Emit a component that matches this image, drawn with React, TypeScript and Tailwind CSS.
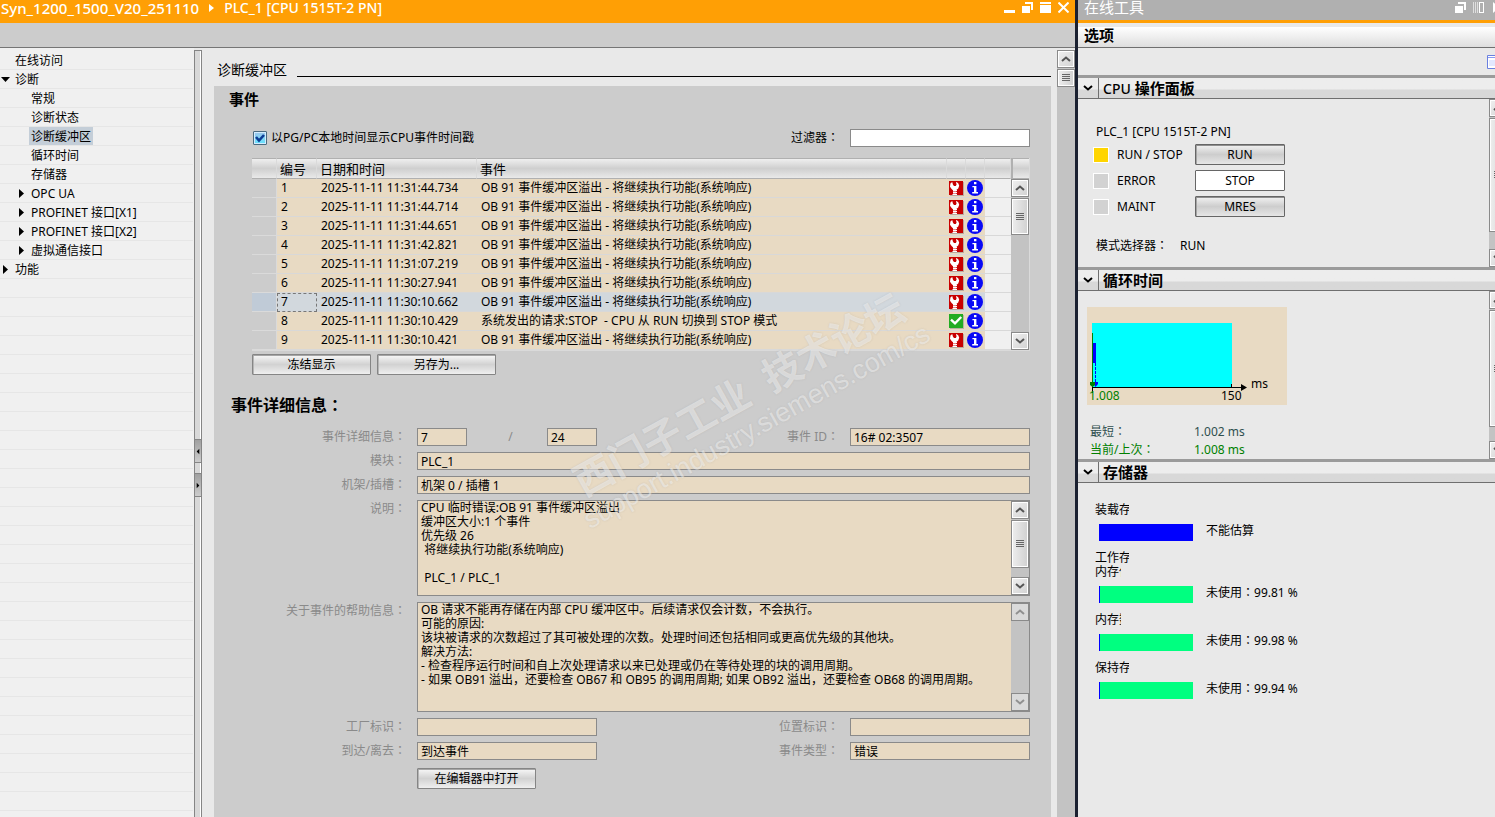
import React, { useState } from 'react';
import clsx from 'clsx';

interface TreeItem {
  label: string;
  level: 0 | 1;
  arrow?: 'open' | 'closed';
}

interface DiagEvent {
  id: number;
  time: string;
  text: string;
  ok?: boolean;
}

const OVERFLOW = 'OB 91 事件缓冲区溢出 - 将继续执行功能(系统响应)';

const treeItems: TreeItem[] = [
  { label: '在线访问', level: 0 },
  { label: '诊断', level: 0, arrow: 'open' },
  { label: '常规', level: 1 },
  { label: '诊断状态', level: 1 },
  { label: '诊断缓冲区', level: 1 },
  { label: '循环时间', level: 1 },
  { label: '存储器', level: 1 },
  { label: 'OPC UA', level: 1, arrow: 'closed' },
  { label: 'PROFINET 接口[X1]', level: 1, arrow: 'closed' },
  { label: 'PROFINET 接口[X2]', level: 1, arrow: 'closed' },
  { label: '虚拟通信接口', level: 1, arrow: 'closed' },
  { label: '功能', level: 0, arrow: 'closed' },
];

const events: DiagEvent[] = [
  { id: 1, time: '2025-11-11 11:31:44.734', text: OVERFLOW },
  { id: 2, time: '2025-11-11 11:31:44.714', text: OVERFLOW },
  { id: 3, time: '2025-11-11 11:31:44.651', text: OVERFLOW },
  { id: 4, time: '2025-11-11 11:31:42.821', text: OVERFLOW },
  { id: 5, time: '2025-11-11 11:31:07.219', text: OVERFLOW },
  { id: 6, time: '2025-11-11 11:30:27.941', text: OVERFLOW },
  { id: 7, time: '2025-11-11 11:30:10.662', text: OVERFLOW },
  { id: 8, time: '2025-11-11 11:30:10.429', text: '系统发出的请求:STOP  - CPU 从 RUN 切换到 STOP 模式', ok: true },
  { id: 9, time: '2025-11-11 11:30:10.421', text: OVERFLOW },
];

const description = `CPU 临时错误:OB 91 事件缓冲区溢出
缓冲区大小:1 个事件
优先级 26
 将继续执行功能(系统响应)

 PLC_1 / PLC_1`;

const helpText = `OB 请求不能再存储在内部 CPU 缓冲区中。后续请求仅会计数，不会执行。
可能的原因:
该块被请求的次数超过了其可被处理的次数。处理时间还包括相同或更高优先级的其他块。
解决方法:
- 检查程序运行时间和自上次处理请求以来已处理或仍在等待处理的块的调用周期。
- 如果 OB91 溢出，还要检查 OB67 和 OB95 的调用周期; 如果 OB92 溢出，还要检查 OB68 的调用周期。`;

// Full-width colon, centred in its cell
const Colon = () => <span className="font-['Noto_Sans_CJK_TC',sans-serif] leading-none">：</span>;

const Chevron = ({ up }: { up?: boolean }) => (
  <svg width="10" height="6" viewBox="0 0 10 6" fill="none" stroke="currentColor" strokeWidth="2">
    <path d={up ? 'M1 5 L5 1.5 L9 5' : 'M1 1 L5 4.5 L9 1'} />
  </svg>
);

const ScrollButton = ({ up, disabled }: { up?: boolean; disabled?: boolean }) => (
  <button
    aria-label={up ? '向上' : '向下'}
    disabled={disabled}
    className={clsx(
      'flex h-[18px] w-[18px] shrink-0 items-center justify-center border border-[#8a8a8a]',
      disabled ? 'bg-[#dadada] text-[#909090]' : 'bg-linear-to-br from-[#f0f0f0] to-[#d2d2d2] text-[#555] shadow-[inset_0_0_0_1px_#fff]'
    )}
  >
    <Chevron up={up} />
  </button>
);

const ScrollBar = ({ thumb, disabled, down = true }: { thumb?: string; disabled?: boolean; down?: boolean }) => (
  <div className="flex w-[18px] shrink-0 flex-col bg-[#c3c3c3]">
    <ScrollButton up disabled={disabled} />
    {thumb && (
      <div
        className={clsx(
          'mt-px flex shrink-0 items-center justify-center border border-[#8a8a8a] bg-linear-to-r from-[#eee] to-[#d0d0d0] shadow-[inset_0_0_0_1px_#fff]',
          thumb
        )}
      >
        <svg width="8" height="8" viewBox="0 0 8 8" stroke="#666" shapeRendering="crispEdges">
          <path d="M0 .5H8M0 2.5H8M0 4.5H8M0 6.5H8" />
        </svg>
      </div>
    )}
    <div className="flex-1" />
    {down && <ScrollButton disabled={disabled} />}
  </div>
);

const PushButton = ({ children, className }: { children: React.ReactNode; className?: string }) => (
  <button
    className={clsx(
      'h-[21px] rounded-[1px] border text-center leading-[17px] text-black',
      className ??
        'w-[119px] border-[#858585] bg-linear-to-b from-[#f8f8f8] via-[#d2d2d2] to-[#efefef] shadow-[inset_0_1px_0_#a5a5a5,inset_1px_0_0_#b5b5b5]'
    )}
  >
    {children}
  </button>
);

const WrenchIcon = () => (
  <svg width="15" height="15" viewBox="0 0 15 15" className="block">
    <path d="M1 1H15V15H1Z" fill="#b9a9a0" />
    <path d="M0 0H14V14H0Z" fill="#c80000" />
    <path d="M3.2 1 L1.4 2.6 L1 5.8 L2.6 8 L4 9.2 H7 L9.2 7.4 L10.2 4.8 L9.4 2.4 L7.6 1 L7 1.4 L7.6 3.6 L6.8 5 L5 5 L4 3.8 Z" fill="#fff" />
    <path d="M4 9.5H8M4 11.5H8M3.5 13.5H8" stroke="#fff" />
    <path d="M4 10.5H7.4M4 12.5H7.4" stroke="#f4b0b0" strokeWidth=".8" />
  </svg>
);

const OkIcon = () => (
  <svg width="15" height="15" viewBox="0 0 15 15" className="block">
    <path d="M1 1H15V15H1Z" fill="#b5b5a0" />
    <path d="M0 0H14V14H0Z" fill="#22ac22" />
    <path d="M2 5.6 L6 9.4 L12.2 3" fill="none" stroke="#fff" strokeWidth="2.4" />
  </svg>
);

const InfoIcon = () => (
  <svg width="16" height="16" viewBox="0 0 16 16" className="block">
    <circle cx="8" cy="8" r="8" fill="#0a0af5" />
    <path d="M7 2H9.4V4.3H7ZM5.4 6H9.4V12H11V13.4H5.2V12H7V7.2H5.4Z" fill="#fff" />
  </svg>
);

const TreeArrow = ({ dir }: { dir: 'open' | 'closed' }) => (
  <svg width="9" height="9" viewBox="0 0 9 9">
    <path d={dir === 'open' ? 'M0 2H9L4.5 7Z' : 'M2 0V9L7 4.5Z'} fill="#000" />
  </svg>
);

const RestoreIcon = () => (
  <svg width="11" height="11" viewBox="0 0 11 11">
    <path d="M0 4H8V11H0Z" fill="#fff" />
    <path d="M3 0H11V8H9V2H3Z" fill="#fff" />
  </svg>
);

const inputClass = 'h-[18px] border border-[#8a8a8a] bg-[#e8dac3] px-[3px]';

const LabelCell = ({ htmlFor, children }: { htmlFor: string; children: React.ReactNode }) => (
  <label htmlFor={htmlFor} className="h-[18px] w-[203px] shrink-0 pr-[11px] text-right leading-[18px] text-[#8a8a8a]">
    {children}
    <Colon />
  </label>
);

// Second label and box of a row, pushed to the right edge
const RightField = ({ id, label, value }: { id: string; label: string; value: string }) => (
  <>
    <label htmlFor={id} className="ml-auto h-[18px] pr-[11px] leading-[18px] text-[#8a8a8a]">
      {label}
      <Colon />
    </label>
    <input id={id} readOnly value={value} className={clsx(inputClass, 'w-[180px]')} />
  </>
);

const EventTable = ({ selected, onSelect }: { selected: number; onSelect: (id: number) => void }) => (
  <div className="ml-[38px] flex border-r border-b border-[#dadada]">
    <table className="min-w-0 flex-1 table-fixed border-separate border-spacing-0 text-left">
      <colgroup>
        <col className="w-[25px]" />
        <col className="w-[40px]" />
        <col className="w-[160px]" />
        <col />
        <col className="w-[19px]" />
        <col className="w-[19px]" />
        <col className="w-[26px]" />
      </colgroup>
      <thead>
        <tr>
          {['', '编号', '日期和时间', '事件', '', '', ''].map((title, i) => (
            <th
              key={i}
              className="h-[21px] border-t border-r border-b border-t-[#b0b0b0] border-r-[#dadada] border-b-[#b0b0b0] bg-linear-to-b from-[#efefef] via-[#cfcfcf] to-[#e9e9e9] p-0 pl-[3px] text-[13px] leading-[14px] font-normal"
            >
              {title}
            </th>
          ))}
        </tr>
      </thead>
      <tbody>
        {events.map(ev => {
          const active = ev.id === selected;
          const cell = clsx('h-[19px] overflow-hidden border-b border-[#d8d8d8] p-0 whitespace-pre', active ? 'bg-[#d2d8dd]' : 'bg-[#e8dac3]');
          return (
            <tr key={ev.id} onClick={() => onSelect(ev.id)}>
              <td className={clsx('h-[19px] border-r border-b border-[#dadada] p-0', active ? 'bg-[#c0cbd7]' : 'bg-[#ccc]')} />
              <td className={clsx(cell, 'pl-1', active && 'outline outline-dashed outline-[#777] -outline-offset-1')}>{ev.id}</td>
              <td className={clsx(cell, 'pl-1')}>{ev.time}</td>
              <td className={clsx(cell, 'pl-1')}>{ev.text}</td>
              <td className={clsx(cell, 'pl-[2px]')}>{ev.ok ? <OkIcon /> : <WrenchIcon />}</td>
              <td className={clsx(cell, 'pl-px')}>
                <InfoIcon />
              </td>
              <td className="h-[19px] border-b border-[#d8d8d8] bg-[#f0f0f0] p-0" />
            </tr>
          );
        })}
      </tbody>
    </table>
    <div className="flex flex-col">
      <div className="h-[21px] border-y border-l-2 border-[#b0b0b0] bg-linear-to-b from-[#efefef] via-[#cfcfcf] to-[#e9e9e9]" />
      <div className="flex flex-1">
        <ScrollBar thumb="h-[37px]" />
      </div>
    </div>
  </div>
);

const SectionHeader = ({ children }: { children: React.ReactNode }) => (
  <div className="flex h-[24px] shrink-0 items-center border-t-[3px] border-b border-t-[#9b9b9b] border-b-[#6f6f6f] bg-linear-to-b from-[#ededed] from-55% to-[#d8d8d8] to-60%">
    <button aria-label="折叠" className="flex h-full w-[21px] items-center justify-center border-r border-[#6f6f6f]">
      <Chevron />
    </button>
    <h2 className="pl-1 text-[15px] leading-[20px] font-bold">{children}</h2>
  </div>
);

// The scroll bar runs past the right window edge, only its left part shows
const CutScrollBar = ({ thumb }: { thumb: string }) => (
  <div className="ml-auto flex w-[6px] shrink-0 overflow-hidden">
    <ScrollBar thumb={thumb} />
  </div>
);

const CpuPanel = () => (
  <div className="flex">
    <div className="flex-1 pt-[26px] pb-[14px] pl-[15px] leading-[14px]">
      <p className="pl-[3px]">PLC_1 [CPU 1515T-2 PN]</p>
      <div className="mt-[5px] flex flex-col gap-[5px]">
        {[
          { led: 'RUN / STOP', on: true, cmd: 'RUN' },
          { led: 'ERROR', on: false, cmd: 'STOP' },
          { led: 'MAINT', on: false, cmd: 'MRES' },
        ].map(row => (
          <div key={row.cmd} className="flex items-center">
            <span className={clsx('size-4 border border-white', row.on ? 'bg-[#ffd500]' : 'bg-[#d2d2d2]')} />
            <span className="w-[86px] pl-2">{row.led}</span>
            <PushButton
              className={clsx(
                'w-[90px] border-[#666]',
                row.cmd === 'STOP'
                  ? 'bg-white'
                  : 'bg-linear-to-b from-[#f2f2f2] via-[#cdcdcd] to-[#e6e6e6] shadow-[inset_0_1px_0_#8f8f8f,inset_1px_0_0_#a5a5a5]'
              )}
            >
              {row.cmd}
            </PushButton>
          </div>
        ))}
      </div>
      <p className="mt-[22px] flex h-[14px] pl-[3px]">
        <span className="w-[84px]">
          模式选择器
          <Colon />
        </span>
        RUN
      </p>
    </div>
    <CutScrollBar thumb="h-[114px]" />
  </div>
);

const CyclePanel = () => (
  <div className="flex">
    <div className="flex-1 pt-4 pl-[9px] leading-[18px]">
      <svg width="200" height="98" viewBox="0 0 200 98" className="block bg-[#e8dac3] text-xs">
        <path d="M5 16H145V80H5Z" fill="#00ffff" />
        <g shapeRendering="crispEdges">
          <path d="M5.5 26V80" stroke="#008000" />
          <path d="M6 36H9V56H6Z" fill="#0000ff" />
          <path d="M8.5 56V78" stroke="#0000ff" strokeDasharray="3 1" />
          <path d="M5 80.5H155M5.5 80V86M144.5 77V80" stroke="#000" />
        </g>
        <path d="M6 75H11V77L8.5 80Z" fill="#0000ff" />
        <path d="M3 75H8V78L5.5 80L3 78Z" fill="#008000" />
        <path d="M154 77V84L160 80.5Z" fill="#000" />
        <text x="164" y="81">ms</text>
        <text x="2" y="93" fill="#008000">1.008</text>
        <text x="134" y="93">150</text>
      </svg>
      <p className="mt-[18px] flex h-[18px] pl-[3px] text-[#2f4f4f]">
        <span className="w-[104px]">
          最短
          <Colon />
        </span>
        1.002 ms
      </p>
      <p className="flex h-[18px] pl-[3px] text-[#008000]">
        <span className="w-[104px]">
          当前/上次
          <Colon />
        </span>
        1.008 ms
      </p>
    </div>
    <CutScrollBar thumb="h-[117px]" />
  </div>
);

const MemoryItem = ({ title, sub, value }: { title?: string; sub?: string; value: string }) => (
  <div className="leading-[14px]">
    {title && <p className="w-[34px] overflow-hidden whitespace-nowrap">{title}</p>}
    {sub && <p className="w-[26px] overflow-hidden whitespace-nowrap">{sub}</p>}
    <div className="mt-[7px] flex h-[17px] gap-[13px] pl-1">
      <div className={clsx('w-[94px]', value === '' ? 'bg-[#0000ff]' : 'border-l border-[#0000ff] bg-[#00ff80]')} />
      {value === '' ? (
        <span>不能估算</span>
      ) : (
        <span>
          未使用
          <Colon />
          {value} %
        </span>
      )}
    </div>
  </div>
);

const OnlineTools = () => (
  <aside className="flex w-[420px] shrink-0 flex-col overflow-hidden border-l-[3px] border-[#1a2030]">
    <header className="flex h-[23px] shrink-0 items-start border-b-[3px] border-[#ff9f05] bg-[#b0b0b0] pl-[6px] text-white">
      <h1 className="text-[15px] leading-[14px]">在线工具</h1>
      <div className="ml-auto flex items-start gap-[7px] pt-[2px]">
        <button aria-label="浮动">
          <RestoreIcon />
        </button>
        <button aria-label="分栏">
          <svg width="11" height="11" viewBox="0 0 11 11" fill="none" stroke="#fff" shapeRendering="crispEdges">
            <path d="M.5 0V11M2.5 0V11M4.5 0V11" strokeOpacity=".6" />
            <path d="M6 .5H10.5V10.5H6Z" />
          </svg>
        </button>
        <svg width="4" height="11" viewBox="0 0 4 11" fill="#fff">
          <path d="M2 0V11L8 5.5Z" />
        </svg>
      </div>
    </header>
    <div className="mt-1 flex h-[21px] shrink-0 items-start border-b border-[#6f6f6f] bg-linear-to-b from-white to-[#dedede] pl-[6px]">
      <h2 className="text-[15px] leading-[16px] font-bold">选项</h2>
    </div>
    <div className="flex h-[27px] shrink-0 items-center justify-end">
      <svg width="8" height="14" viewBox="0 0 8 14">
        <path d="M.5 .5H9V13.5H.5Z" fill="#fff" stroke="#6a80e0" />
        <path d="M1 2.5H9" stroke="#8a9af0" />
        <path d="M2 5H8V11H2Z" fill="#e2e8ff" />
      </svg>
    </div>
    <SectionHeader>
      <span className="text-sm font-medium">CPU</span> 操作面板
    </SectionHeader>
    <CpuPanel />
    <SectionHeader>循环时间</SectionHeader>
    <CyclePanel />
    <SectionHeader>存储器</SectionHeader>
    <div className="flex flex-col gap-[10px] pt-5 pl-[17px]">
      <MemoryItem title="装载存" value="" />
      <MemoryItem title="工作存" sub="内存代" value="99.81" />
      <MemoryItem sub="内存数" value="99.98" />
      <MemoryItem title="保持存" value="99.94" />
    </div>
  </aside>
);

const Splitter = () => (
  <div className="mt-[2px] flex w-2 shrink-0 flex-col border-t border-r border-l border-[#858585] bg-[#d8d8d8] shadow-[inset_-1px_0_0_#fff]">
    <div className="h-[388px] shrink-0" />
    {['M5 1V9L1 5Z', 'M1 1V9L5 5Z'].map(d => (
      <button key={d} aria-label="调整宽度" className="mb-[10px] flex h-6 shrink-0 items-center justify-center border-y border-[#858585] bg-linear-to-b from-[#a0a0a0] to-[#ccc]">
        <svg width="4" height="7" viewBox="0 0 6 10">
          <path d={d} fill="#000" />
        </svg>
      </button>
    ))}
  </div>
);

export default function App() {
  const [node, setNode] = useState('诊断缓冲区');
  const [selected, setSelected] = useState(7);
  const [localTime, setLocalTime] = useState(true);
  const [filter, setFilter] = useState('');

  return (
    <div className="flex h-screen overflow-hidden bg-[#e9e9e9] font-['Noto_Sans','Noto_Sans_CJK_SC',sans-serif] text-xs text-black">
      <div className="flex min-w-0 flex-1 flex-col">
        {/* Title bar */}
        <header className="flex h-[23px] shrink-0 items-start bg-[#ff9f05] pr-[6px] pl-px text-white">
          <h1 className="flex items-center text-[15px] leading-4 font-medium">
            Syn_1200_1500_V20_251110
            <svg width="5" height="8" viewBox="0 0 5 8" className="mx-[10px]">
              <path d="M0 0V8L5 4Z" fill="#fff" />
            </svg>
            <span className="text-sm leading-4 font-medium">PLC_1 [CPU 1515T-2 PN]</span>
          </h1>
          <div className="ml-auto flex items-center gap-[7px] pt-[2px]">
            <button aria-label="最小化">
              <svg width="11" height="11" viewBox="0 0 11 11">
                <path d="M0 8H11V11H0Z" fill="#fff" />
              </svg>
            </button>
            <button aria-label="还原">
              <RestoreIcon />
            </button>
            <button aria-label="最大化">
              <svg width="11" height="11" viewBox="0 0 11 11" fill="#fff">
                <path d="M0 0H11V2H0ZM0 3H11V11H0Z" />
              </svg>
            </button>
            <button aria-label="关闭">
              <svg width="11" height="11" viewBox="0 0 11 11" stroke="#fff" strokeWidth="2">
                <path d="M.5 .5L10.5 10.5M10.5 .5L.5 10.5" />
              </svg>
            </button>
          </div>
        </header>
        <div className="h-[25px] shrink-0 border-b border-[#757575] bg-[#ccc]" />

        <div className="flex min-h-0 flex-1">
          {/* Navigation tree */}
          <nav className="w-[194px] shrink-0 bg-[#f0f0f0] pt-[3px] pr-px">
            <ul className="h-full bg-[repeating-linear-gradient(to_bottom,#f0f0f0_0_18px,#e6e6e6_18px_19px)]">
              {treeItems.map(item => (
                <li key={item.label} className={clsx('flex h-[19px] items-start', item.level === 1 && 'pl-4')}>
                  <span className="flex h-[18px] w-[13px] items-center pl-px">{item.arrow && <TreeArrow dir={item.arrow} />}</span>
                  <button onClick={() => setNode(item.label)} className={clsx('px-[2px] pt-[2px] leading-4', item.label === node && 'bg-[#c4ced8]')}>
                    {item.label}
                  </button>
                </li>
              ))}
            </ul>
          </nav>
          <Splitter />

          <main className="flex min-w-0 flex-1 flex-col pr-[6px] pl-3">
            <div className="flex h-[38px] shrink-0 items-start gap-[10px] pt-[14px] pl-[3px]">
              <h2 className="text-sm leading-4">诊断缓冲区</h2>
              <div className="h-[15px] flex-1 border-b border-black" />
            </div>

            <section className="relative flex-1 bg-[#ccc] pr-[21px]">
              <h3 className="pt-[5px] pl-[15px] text-[15px] leading-4 font-bold">事件</h3>
              <div className="mt-[22px] flex h-[18px] items-center pl-[39px] leading-[18px]">
                <label className="flex items-center">
                  <span className="relative mr-1 size-[14px]">
                    <input
                      type="checkbox"
                      checked={localTime}
                      onChange={e => setLocalTime(e.target.checked)}
                      className="block size-[14px] appearance-none rounded-[1px] border border-[#4a6a80] bg-linear-to-b from-[#9cc4ea] to-[#5fe4ff] shadow-[inset_0_0_0_1px_#d4ecff]"
                    />
                    {localTime && (
                      <svg viewBox="0 0 14 14" className="pointer-events-none absolute inset-0">
                        <path d="M3 6 L6 9.5 L11 4" fill="none" stroke="#0d3c94" strokeWidth="2.6" />
                      </svg>
                    )}
                  </span>
                  以PG/PC本地时间显示CPU事件时间戳
                </label>
                <label htmlFor="filter" className="ml-auto h-[18px] pr-[11px]">
                  过滤器
                  <Colon />
                </label>
                <input id="filter" value={filter} onChange={e => setFilter(e.target.value)} className="h-[18px] w-[180px] border border-[#8a8a8a] bg-white px-[3px]" />
              </div>

              <div className="mt-[11px]">
                <EventTable selected={selected} onSelect={setSelected} />
              </div>
              <div className="mt-[3px] flex gap-[6px] pl-[38px]">
                <PushButton>冻结显示</PushButton>
                <PushButton>另存为...</PushButton>
              </div>

              <h3 className="mt-[21px] h-4 pl-[17px] text-base leading-4 font-bold">
                事件详细信息
                <Colon />
              </h3>
              <div className="mt-4 flex flex-col gap-[6px]">
                <div className="flex items-center">
                  <LabelCell htmlFor="num">事件详细信息</LabelCell>
                  <input id="num" readOnly value={selected} className={clsx(inputClass, 'w-[50px]')} />
                  <span className="w-20 pl-[7px] text-center text-[#8a8a8a]">/</span>
                  <input aria-label="总数" readOnly value="24" className={clsx(inputClass, 'w-[50px]')} />
                  <RightField id="event-id" label="事件 ID" value="16# 02:3507" />
                </div>
                <div className="flex">
                  <LabelCell htmlFor="module">模块</LabelCell>
                  <input id="module" readOnly value="PLC_1" className={clsx(inputClass, 'min-w-0 flex-1')} />
                </div>
                <div className="flex">
                  <LabelCell htmlFor="slot">机架/插槽</LabelCell>
                  <input id="slot" readOnly value="机架 0 / 插槽 1" className={clsx(inputClass, 'min-w-0 flex-1')} />
                </div>
                <div className="flex">
                  <LabelCell htmlFor="desc">说明</LabelCell>
                  <div className="flex h-24 min-w-0 flex-1 border border-[#8a8a8a] bg-[#e8dac3]">
                    <textarea id="desc" readOnly value={description} className="min-w-0 flex-1 resize-none overflow-hidden pl-[3px] leading-[14px] outline-none" />
                    <ScrollBar thumb="h-[48px]" />
                  </div>
                </div>
                <div className="flex">
                  <LabelCell htmlFor="help">关于事件的帮助信息</LabelCell>
                  <div className="flex h-[110px] min-w-0 flex-1 border border-[#8a8a8a] bg-[#e8dac3]">
                    <textarea id="help" readOnly value={helpText} className="min-w-0 flex-1 resize-none overflow-hidden pl-[3px] leading-[14px] outline-none" />
                    <ScrollBar disabled />
                  </div>
                </div>
                <div className="flex items-center">
                  <LabelCell htmlFor="plant">工厂标识</LabelCell>
                  <input id="plant" readOnly value="" className={clsx(inputClass, 'w-[180px]')} />
                  <RightField id="location" label="位置标识" value="" />
                </div>
                <div className="flex items-center">
                  <LabelCell htmlFor="state">到达/离去</LabelCell>
                  <input id="state" readOnly value="到达事件" className={clsx(inputClass, 'w-[180px]')} />
                  <RightField id="kind" label="事件类型" value="错误" />
                </div>
              </div>
              <div className="mt-2 pl-[203px]">
                <PushButton>在编辑器中打开</PushButton>
              </div>

              {/* Watermark lying over the table and the details */}
              <div className="pointer-events-none absolute top-[286px] left-[333px] w-[400px] -rotate-[29deg] text-center whitespace-pre text-white/45 [text-shadow:0_0_2px_rgba(150,150,150,0.3)]">
                <p className="text-[39px] leading-[40px] font-bold">西门子工业  技术论坛</p>
                <p className="font-['Liberation_Sans',sans-serif] text-[27px] leading-[34px]">support.industry.siemens.com/cs</p>
              </div>
            </section>
          </main>

          <div className="flex pt-[2px]">
            <ScrollBar thumb="h-[18px]" down={false} />
          </div>
        </div>
      </div>

      <OnlineTools />
    </div>
  );
}
